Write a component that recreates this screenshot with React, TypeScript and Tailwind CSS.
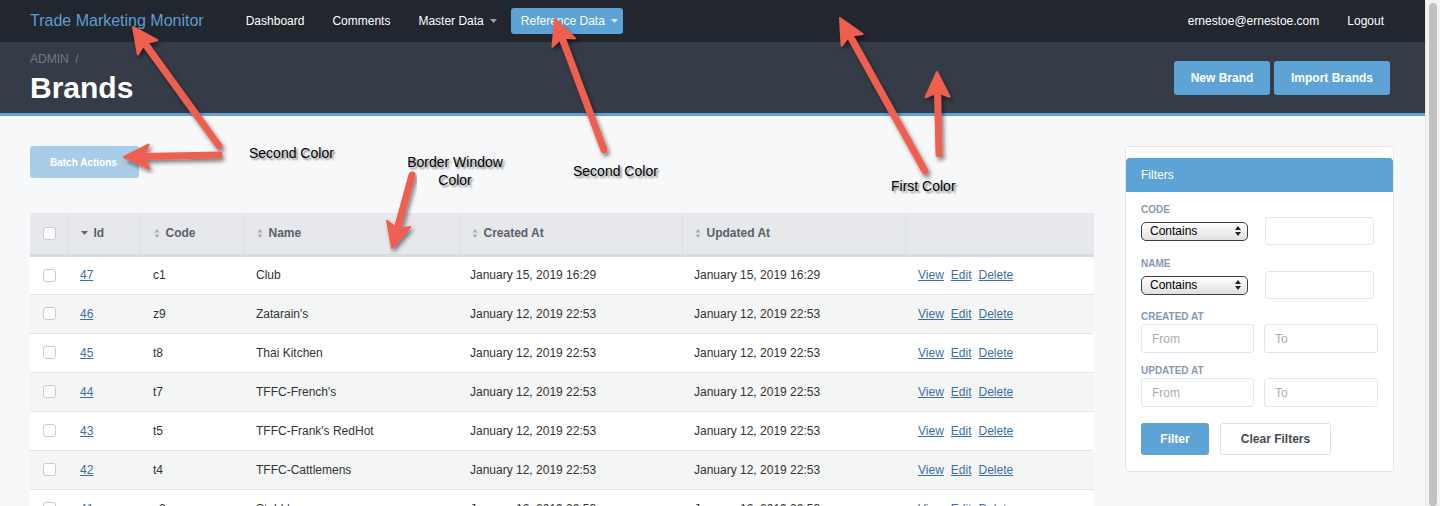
import React from "react";

const rows: string[][] = [
  ["47", "c1", "Club", "January 15, 2019 16:29", "January 15, 2019 16:29"],
  ["46", "z9", "Zatarain's", "January 12, 2019 22:53", "January 12, 2019 22:53"],
  ["45", "t8", "Thai Kitchen", "January 12, 2019 22:53", "January 12, 2019 22:53"],
  ["44", "t7", "TFFC-French's", "January 12, 2019 22:53", "January 12, 2019 22:53"],
  ["43", "t5", "TFFC-Frank's RedHot", "January 12, 2019 22:53", "January 12, 2019 22:53"],
  ["42", "t4", "TFFC-Cattlemens", "January 12, 2019 22:53", "January 12, 2019 22:53"],
  ["41", "s2", "Stubb's", "January 12, 2019 22:53", "January 12, 2019 22:53"],
];

function Caret({ color = "#b9c2cc" }: { color?: string }) {
  return (
    <svg width="7" height="4" viewBox="0 0 7 4" className="inline-block">
      <path d="M0 0H7L3.5 4Z" fill={color} />
    </svg>
  );
}

function SortIcon() {
  return (
    <svg width="6" height="9" viewBox="0 0 6 9" className="block">
      <path d="M3 0L5.5 3.4H0.5Z M3 9L0.5 5.6H5.5Z" fill="#a6acb4" />
    </svg>
  );
}

function SortDown() {
  return (
    <svg width="7" height="4" viewBox="0 0 7 4" className="block">
      <path d="M0 0H7L3.5 4Z" fill="#5f6670" />
    </svg>
  );
}

function Checkbox() {
  return <div className="w-[13px] h-[13px] rounded-[3px] border border-[#c9cbce] bg-white" />;
}

function MacSelect() {
  return (
    <div className="w-[107px] h-[19px] rounded-[5px] border border-[#3f3f3f] bg-gradient-to-b from-white to-[#e0e0e0] flex items-center justify-between pl-[8px] pr-[6px] text-[12px] text-black leading-none">
      <span>Contains</span>
      <svg width="6" height="10" viewBox="0 0 6 10">
        <path d="M3 0L6 4H0Z M3 10L0 6H6Z" fill="#222" />
      </svg>
    </div>
  );
}

type ArrowDef = [number, number, number, number];
const arrows: ArrowDef[] = [
  [219, 146, 133, 27],
  [219, 155, 124, 157],
  [412, 175, 392, 248],
  [604, 150, 555, 19],
  [925, 171, 840, 18],
  [939, 154, 937, 72],
];

function Arrow({ a }: { a: ArrowDef }) {
  const [x1, y1, x2, y2] = a;
  const dx = x2 - x1;
  const dy = y2 - y1;
  const len = Math.hypot(dx, dy);
  const ux = dx / len;
  const uy = dy / len;
  const hl = 25;
  const hw = 12;
  const bx = x2 - ux * hl;
  const by = y2 - uy * hl;
  const px = -uy;
  const py = ux;
  const nx = bx + ux * 5;
  const ny = by + uy * 5;
  const pts = `${x2},${y2} ${bx + px * hw},${by + py * hw} ${nx},${ny} ${bx - px * hw},${by - py * hw}`;
  return (
    <g filter="url(#shadow)">
      <line x1={x1} y1={y1} x2={nx + ux * 2} y2={ny + uy * 2} stroke="#ee5f4f" strokeWidth="7" strokeLinecap="round" />
      <polygon points={pts} fill="#ee5f4f" stroke="#ee5f4f" strokeWidth="2" strokeLinejoin="round" />
    </g>
  );
}

const annot = "absolute text-[14px] leading-[18px] text-black [text-shadow:2px_2px_2px_rgba(0,0,0,0.45)] whitespace-nowrap";
const th = "border-r border-[#dcdfe4] font-bold";
const label = "text-[10px] leading-[13px] font-bold text-[#8899ae]";
const dateBox = "h-[29px] border border-[#e3e6ea] rounded-[3px] bg-white flex items-center pl-[10px] text-[12px] text-[#a9adb2]";

export default function App() {
  return (
    <div className="flex h-[506px] w-[1440px] overflow-hidden font-['Liberation_Sans',Arial,sans-serif]">
      <div className="relative w-[1425px] shrink-0 bg-[#f7f8fa]">
        {/* Top nav */}
        <div className="h-[42px] bg-[#22262e] flex items-center px-[30px]">
          <div className="text-[16px] text-[#5a9fd4]">Trade Marketing Monitor</div>
          <div className="flex items-center gap-[8px] ml-[32px] text-[12px] text-white">
            <div className="px-[10px] h-[26px] flex items-center">Dashboard</div>
            <div className="px-[10px] h-[26px] flex items-center">Comments</div>
            <div className="px-[10px] h-[26px] flex items-center gap-[6px]">
              Master Data <Caret color="#9aa3ad" />
            </div>
            <div className="-ml-[4px] pl-[10px] pr-[5px] h-[26px] flex items-center gap-[6px] bg-[#5ea3d5] rounded-[3px]">
              Reference Data <Caret color="#d6e6f3" />
            </div>
          </div>
          <div className="ml-auto mr-[11px] flex items-center gap-[28px] text-[12px] text-white">
            <span>ernestoe@ernestoe.com</span>
            <span>Logout</span>
          </div>
        </div>

        {/* Sub header */}
        <div className="h-[74px] bg-[#363c47] border-b-[3px] border-[#5ea3d5] px-[30px] flex justify-between">
          <div className="pt-[10px]">
            <div className="text-[12px] leading-[14px] text-[#6f7a88]">ADMIN&nbsp;&nbsp;/</div>
            <div className="mt-[5px] text-[30px] leading-[34px] font-bold text-white">Brands</div>
          </div>
          <div className="flex gap-[4px] pt-[19px] pr-[5px]">
            <div className="w-[96px] h-[34px] rounded-[3px] bg-[#5ea3d5] text-white text-[12px] font-bold flex items-center justify-center">New Brand</div>
            <div className="w-[116px] h-[34px] rounded-[3px] bg-[#5ea3d5] text-white text-[12px] font-bold flex items-center justify-center">Import Brands</div>
          </div>
        </div>

        {/* Main */}
        <div className="flex gap-[31px] px-[30px] pt-[30px]">
          <div className="w-[1064px] shrink-0">
            <div className="w-[109px] h-[32px] rounded-[3px] bg-[#a9cde8] text-white text-[10px] font-bold flex items-center pl-[20px] gap-[6px]">
              Batch Actions <Caret color="#c9def0" />
            </div>
            <table className="mt-[35px] w-[1064px] table-fixed border-collapse text-[12px] text-[#333]">
              <colgroup>
                <col className="w-[37px]" />
                <col className="w-[73px]" />
                <col className="w-[103px]" />
                <col className="w-[216px]" />
                <col className="w-[223px]" />
                <col className="w-[223px]" />
                <col className="w-[189px]" />
              </colgroup>
              <thead>
                <tr className="h-[42px] bg-[#e6e8ec] border-b-[3px] border-[#d7dbe2] text-[#59606b] text-left">
                  <th className={`px-[13px] ${th}`}><Checkbox /></th>
                  <th className={`pl-[13px] ${th}`}><div className="flex items-center gap-[6px]"><SortDown />Id</div></th>
                  <th className={`pl-[13px] ${th}`}><div className="flex items-center gap-[6px]"><SortIcon />Code</div></th>
                  <th className={`pl-[13px] ${th}`}><div className="flex items-center gap-[6px]"><SortIcon />Name</div></th>
                  <th className={`pl-[12px] ${th}`}><div className="flex items-center gap-[6px]"><SortIcon />Created At</div></th>
                  <th className={`pl-[12px] ${th}`}><div className="flex items-center gap-[6px]"><SortIcon />Updated At</div></th>
                  <th></th>
                </tr>
              </thead>
              <tbody>
                {rows.map((r, i) => (
                  <tr key={r[0]} className={`h-[39px] border-b border-[#e4e6e9] ${i % 2 === 1 ? "bg-[#f4f5f5]" : "bg-white"}`}>
                    <td className="px-[13px]"><Checkbox /></td>
                    <td className="pl-[13px]"><span className="text-[#3c6fa4] underline">{r[0]}</span></td>
                    <td className="pl-[13px]">{r[1]}</td>
                    <td className="pl-[13px]">{r[2]}</td>
                    <td className="pl-[11px]">{r[3]}</td>
                    <td className="pl-[12px]">{r[4]}</td>
                    <td className="pl-[13px]">
                      <span className="flex gap-[7px] text-[#3c6fa4] underline">
                        <span>View</span><span>Edit</span><span>Delete</span>
                      </span>
                    </td>
                  </tr>
                ))}
              </tbody>
            </table>
          </div>

          {/* Filters */}
          <div className="w-[269px] shrink-0">
            <div className="bg-white border border-[#e3e6ea] rounded-[4px] pt-[11px] pb-[16px]">
              <div className="h-[34px] bg-[#5ea3d5] rounded-t-[4px] flex items-center px-[15px] text-white text-[12px]">Filters</div>
              <div className="px-[15px] pt-[11px]">
                <div className={label}>CODE</div>
                <div className="mt-[1px] flex items-center gap-[17px]">
                  <MacSelect />
                  <div className="w-[109px] h-[28px] border border-[#e3e6ea] rounded-[3px] bg-white" />
                </div>
                <div className={`mt-[12px] ${label}`}>NAME</div>
                <div className="mt-[1px] flex items-center gap-[17px]">
                  <MacSelect />
                  <div className="w-[109px] h-[28px] border border-[#e3e6ea] rounded-[3px] bg-white" />
                </div>
                <div className={`mt-[11px] ${label}`}>CREATED AT</div>
                <div className="mt-[1px] grid grid-cols-[113px_114px] gap-[10px]">
                  <div className={dateBox}>From</div>
                  <div className={dateBox}>To</div>
                </div>
                <div className={`mt-[11px] ${label}`}>UPDATED AT</div>
                <div className="mt-[1px] grid grid-cols-[113px_114px] gap-[10px]">
                  <div className={dateBox}>From</div>
                  <div className={dateBox}>To</div>
                </div>
                <div className="mt-[16px] flex gap-[11px]">
                  <div className="w-[68px] h-[32px] rounded-[3px] bg-[#5ea3d5] text-white text-[12px] font-bold flex items-center justify-center">Filter</div>
                  <div className="w-[111px] h-[32px] rounded-[3px] border border-[#dcdfe3] bg-white text-[#454b53] text-[12px] font-bold flex items-center justify-center">Clear Filters</div>
                </div>
              </div>
            </div>
          </div>
        </div>

        {/* Annotation overlay */}
        <svg className="absolute inset-0 pointer-events-none" width="1425" height="506">
          <defs>
            <filter id="shadow" x="-20%" y="-20%" width="140%" height="140%">
              <feDropShadow dx="2" dy="3" stdDeviation="2" floodColor="#000" floodOpacity="0.5" />
            </filter>
          </defs>
          {arrows.map((a, i) => (
            <Arrow key={i} a={a} />
          ))}
        </svg>
        <div className={`${annot} left-[249px] top-[144px]`}>Second Color</div>
        <div className={`${annot} left-[405px] top-[153px] w-[100px] text-center`}>
          Border Window
          <br />
          Color
        </div>
        <div className={`${annot} left-[573px] top-[162px]`}>Second Color</div>
        <div className={`${annot} left-[891px] top-[177px]`}>First Color</div>
      </div>

      {/* Scrollbar */}
      <div className="w-[15px] shrink-0 bg-[#f3f3f3] border-l border-[#e2e2e2] pt-[3px] flex justify-center">
        <div className="w-[8px] h-full rounded-[4px] bg-[#c1c1c1]" />
      </div>
    </div>
  );
}
